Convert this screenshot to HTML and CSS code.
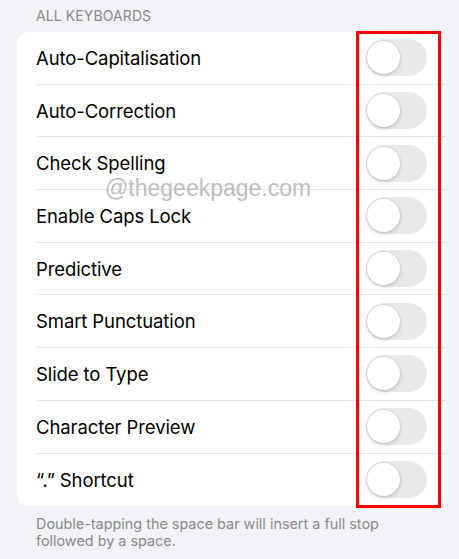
FILE: index.html
```html
<!DOCTYPE html>
<html>
<head>
<meta charset="utf-8">
<link rel="stylesheet" href="styles.css">
</head>
<body>
<div class="page">
  <div class="section-header">ALL KEYBOARDS</div>
  <div class="card">
    <div class="row"><span class="label">Auto-Capitalisation</span><span class="toggle"><span class="knob"></span></span></div>
    <div class="row"><span class="label">Auto-Correction</span><span class="toggle"><span class="knob"></span></span></div>
    <div class="row"><span class="label">Check Spelling</span><span class="toggle"><span class="knob"></span></span></div>
    <div class="row"><span class="label">Enable Caps Lock</span><span class="toggle"><span class="knob"></span></span></div>
    <div class="row"><span class="label">Predictive</span><span class="toggle"><span class="knob"></span></span></div>
    <div class="row"><span class="label">Smart Punctuation</span><span class="toggle"><span class="knob"></span></span></div>
    <div class="row"><span class="label">Slide to Type</span><span class="toggle"><span class="knob"></span></span></div>
    <div class="row"><span class="label">Character Preview</span><span class="toggle"><span class="knob"></span></span></div>
    <div class="row last"><span class="label">“.” Shortcut</span><span class="toggle"><span class="knob"></span></span></div>
  </div>
  <div class="footer">Double-tapping the space bar will insert a full stop followed by a space.</div>
  <div class="watermark">@thegeekpage.com</div>
  <div class="highlight"></div>
</div>
</body>
</html>
```
FILE: styles.css
```css
html, body {
  margin: 0;
  padding: 0;
  background: #f2f2f7;
}
.page {
  position: relative;
  width: 459px;
  height: 559px;
  overflow: hidden;
  font-family: Inter, "Liberation Sans", sans-serif;
  color: #000;
}
.section-header {
  padding: 8px 0 0 36px;
  height: 32px;
  box-sizing: border-box;
  font-size: 14px;
  line-height: 16px;
  color: #8a8a8e;
  letter-spacing: 0.1px;
}
.card {
  margin: 0 13px 0 17px;
  background: #fff;
  border-radius: 12px;
  padding-left: 19px;
  display: flex;
  flex-direction: column;
}
.row {
  height: 52.7px;
  box-sizing: border-box;
  display: flex;
  align-items: center;
  justify-content: space-between;
  padding-right: 19px;
  border-bottom: 1px solid #e3e3e6;
}
.row.last {
  border-bottom: none;
}
.label {
  font-size: 18.5px;
  letter-spacing: -0.1px;
}
.toggle {
  position: relative;
  width: 61px;
  height: 37px;
  border-radius: 19px;
  background: #e9e9eb;
  flex: none;
}
.knob {
  position: absolute;
  left: 1px;
  top: 2px;
  width: 33px;
  height: 33px;
  border-radius: 50%;
  background: #fff;
  box-shadow: 0 2px 4px rgba(0,0,0,0.15), 0 0 0 1px rgba(0,0,0,0.05);
}
.footer {
  padding: 9px 30px 0 36px;
  font-size: 14.4px;
  line-height: 17px;
  color: #8a8a8e;
}
.watermark {
  position: absolute;
  left: 105px;
  top: 177px;
  font-family: "Liberation Sans", Arial, sans-serif;
  font-size: 23px;
  line-height: 23px;
  color: #bdbdbd;
}
.highlight {
  position: absolute;
  left: 356px;
  top: 31px;
  width: 85px;
  height: 477px;
  box-sizing: border-box;
  border: 3px solid #ff0000;
}
```
